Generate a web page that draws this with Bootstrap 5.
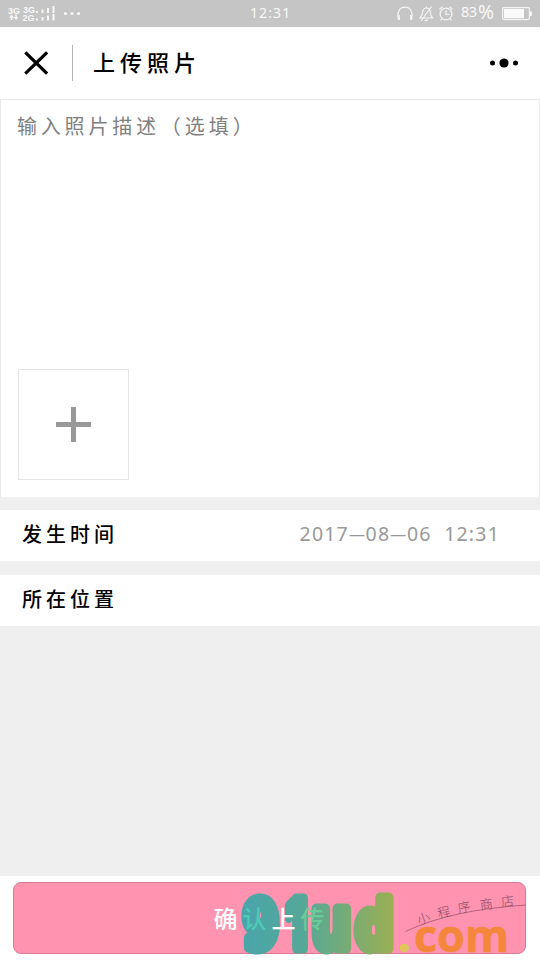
<!DOCTYPE html>
<html lang="zh-CN">
<head>
<meta charset="utf-8">
<meta name="viewport" content="width=device-width, initial-scale=1">
<title>上传照片</title>
<link href="https://cdn.jsdelivr.net/npm/bootstrap@5.3.0/dist/css/bootstrap.min.css" rel="stylesheet">
<style>
body{font-family:"Noto Sans","Noto Sans CJK SC",sans-serif;background:#efefef;color:#000;height:960px;overflow:hidden}
.statusbar{height:27px;background:#c5c5c5;color:#f7f7f7}
.statusbar svg,.topbar svg,.adder svg{display:block;flex:none}
.clock{font-size:14px;letter-spacing:1.1px;line-height:25px;height:27px;width:44px}
.topbar{height:72px}
.topbar .rule{width:1px;height:36px;background:#b2b2b2;margin-left:24px}
.topbar h1{font-family:"Noto Sans CJK SC",sans-serif;font-size:22px;font-weight:500;letter-spacing:5px;line-height:30px;margin:-5px 0 0 20px}
.editor{height:398px;border:1px solid #e9e9e9;border-bottom:0;padding:11px 16px 17px 16px}
.hint{font-family:"Noto Sans CJK SC",sans-serif;font-size:20px;letter-spacing:3.8px;line-height:30px;color:#808080;white-space:nowrap}
.hint .tight{margin-left:1px;letter-spacing:4px}
.adder{width:111px;height:111px;border:1.5px solid #e4e4e4;background:#fff;margin-left:1px}
.cell{height:51px;padding:0 40px 3px 22px}
.cell-label{font-family:"Noto Sans CJK SC",sans-serif;font-size:20px;font-weight:500;letter-spacing:4px}
.cell-value{font-size:19.5px;letter-spacing:1.2px;color:#999;white-space:nowrap}
.dash{font-size:16px;letter-spacing:.6px;vertical-align:1.5px}
.footer-bar{height:84px;padding:6px 14px 7px 13px}
.submit{height:72px;background:#ff93b0;border:1px solid #d97b95;border-radius:8px;color:#fff;font-family:"Noto Sans CJK SC",sans-serif;font-size:24px;font-weight:500;letter-spacing:5px;padding:0 0 1px 4px}
.submit:hover{background:#ff93b0;color:#fff}
.watermark{left:240px;top:8px;z-index:1;pointer-events:none}
.submit .tint{color:#4cc9b7}
.submit .tint2{color:#6cca98}
.overprint{position:relative;z-index:2}
</style>
</head>
<body class="d-flex flex-column">
<header class="statusbar d-flex align-items-center justify-content-between flex-shrink-0">
  <svg width="250" height="27" fill="#f7f7f7" font-family="Liberation Sans" font-size="9" font-weight="bold">
    <text x="8" y="13.500" textLength="12">3G</text><text x="23" y="13" textLength="12">3G</text><text x="22.500" y="20.500" textLength="12">2G</text>
    <path d="M11.500 14.500l2.500 3h-1.700v2.500h-1.600v-2.500H9zM16 20l-2.500-3h1.700v-2.500h1.600V17h1.700z"/>
    <path d="M36 11h2v2h-2zM41.500 9.500h2V13h-2zM47 8h2v5h-2zM52.500 6h2v7h-2zM36 18.500h2v2h-2zM41.500 17h2v3.500h-2zM47 15.500h2v5h-2zM52.500 14h2v6.500h-2z"/>
    <circle cx="65.500" cy="13.500" r="1.600"/><circle cx="72" cy="13.500" r="1.600"/><circle cx="78.500" cy="13.500" r="1.600"/>
  </svg>
  <div class="clock">12:31</div>
  <svg width="246" height="27" viewBox="294 0 246 27" fill="none" stroke="#f4f4f4" stroke-width="1.200">
    <path d="M399.500 19.500h-1c-1.800-7 .800-12.300 6.500-12.300s8.300 5.300 6.500 12.300h-1M399.300 15v5M410.700 15v5"/>
    <path d="M420 18h12.500c-2-2-2-4-2.300-6.500-.3-2.300-1.700-3.500-3.700-3.500-2.300 0-3.600 1.500-3.900 4-.3 2.500-.8 4.500-2.600 6zM424.500 20.300h3.500M431.500 6.500L421 21M426.500 8V6.500"/>
    <circle cx="446" cy="14" r="5.900"/><path d="M446 10.500v4h3.300M439.500 9.500l3-2.800M452.500 9.500l-3-2.800M442 18.500l-1.500 2M450 18.500l1.500 2"/>
    <text x="461" y="17" font-family="Noto Sans" font-size="14.500" fill="#f7f7f7" stroke="none" textLength="16">83</text>
    <text x="478" y="19" font-family="Noto Sans" font-size="19" fill="#f7f7f7" stroke="none" textLength="16" lengthAdjust="spacingAndGlyphs">%</text>
    <rect x="502.600" y="7.600" width="26.800" height="12" rx="1.500"/><path d="M504 9h20v9.300h-20zM530 11.500h1.800v4.500H530z" fill="#f9f9f9" stroke="none"/>
  </svg>
</header>
<nav class="topbar bg-white d-flex align-items-center flex-shrink-0 ps-4 pe-3">
  <svg width="24" height="24" stroke="#000" stroke-width="3.200"><path d="M1.300 1.300l21.800 21.400M23.100 1.300L1.300 22.700"/></svg>
  <div class="rule"></div>
  <h1>上传照片</h1>
  <svg class="ms-auto" width="36" height="12"><circle cx="4.500" cy="6" r="2.500"/><circle cx="16" cy="6" r="4.600"/><circle cx="27.500" cy="6" r="2.500"/></svg>
</nav>
<main class="flex-grow-1 d-flex flex-column">
  <section class="editor bg-white d-flex flex-column justify-content-between">
    <div class="hint">输入照片描述<span class="tight">（选填）</span></div>
    <button type="button" class="adder p-0 d-flex align-items-center justify-content-center">
      <svg width="36" height="37" fill="#999"><path d="M15 1h5v15h15v5H20v15h-5V21H0v-5h15z"/></svg>
    </button>
  </section>
  <div class="cell bg-white d-flex align-items-center justify-content-between" style="margin-top:13px">
    <span class="cell-label">发生时间</span>
    <span class="cell-value">2017<span class="dash">—</span>08<span class="dash">—</span>06&nbsp; 12:31</span>
  </div>
  <div class="cell bg-white d-flex align-items-center" style="margin-top:14px">
    <span class="cell-label">所在位置</span>
  </div>
</main>
<footer class="footer-bar bg-white position-relative flex-shrink-0">
  <svg class="watermark position-absolute" width="300" height="76" viewBox="240 884 300 76">
    <defs><linearGradient id="sea" gradientUnits="userSpaceOnUse" x1="243" y1="0" x2="393" y2="0"><stop offset="0" stop-color="#4aa5aa"/><stop offset=".4" stop-color="#55a898"/><stop offset="1" stop-color="#9aaf53"/></linearGradient></defs>
    <g font-family="DejaVu Sans" font-weight="bold" fill="url(#sea)" stroke="url(#sea)" stroke-width="11" stroke-linejoin="round">
      <text x="243" y="947.500" font-size="66" textLength="36" lengthAdjust="spacingAndGlyphs">9</text>
      <text x="286.500" y="948" font-family="Inter" font-weight="900" font-size="68" textLength="20" lengthAdjust="spacingAndGlyphs">1</text>
      <text x="311.500" y="947.500" font-size="71" textLength="40" lengthAdjust="spacingAndGlyphs">u</text>
      <text x="355.500" y="947.500" font-size="65" textLength="38" lengthAdjust="spacingAndGlyphs">d</text>
    </g>
    <text x="398" y="952" font-family="Open Sans" font-size="44" font-weight="800" fill="#dfc65a">.</text>
    <text x="414" y="952" font-family="Open Sans" font-size="44" font-weight="700" fill="#f4873c" stroke="#f4873c" stroke-width=".6" textLength="95" lengthAdjust="spacingAndGlyphs">com</text>
    <path d="M405.500 931.500Q450 910 526 905" fill="none" stroke="#b5657c" stroke-width="1"/>
    <g font-family="Noto Sans CJK SC" font-weight="300" font-size="13" fill="#8b4d62" text-anchor="middle">
      <text transform="translate(425 923) rotate(-18)">小</text><text transform="translate(445 917) rotate(-14)">程</text><text transform="translate(465 912) rotate(-12)">序</text><text transform="translate(487 909) rotate(-8)">商</text><text transform="translate(508 906) rotate(-6)">店</text>
    </g>
  </svg>
  <button type="button" class="submit btn w-100 d-flex align-items-center justify-content-center"><span class="overprint">确<span class="tint">认</span>上<span class="tint2">传</span></span></button>
</footer>
<script src="https://cdn.jsdelivr.net/npm/bootstrap@5.3.0/dist/js/bootstrap.bundle.min.js"></script>
</body>
</html>
